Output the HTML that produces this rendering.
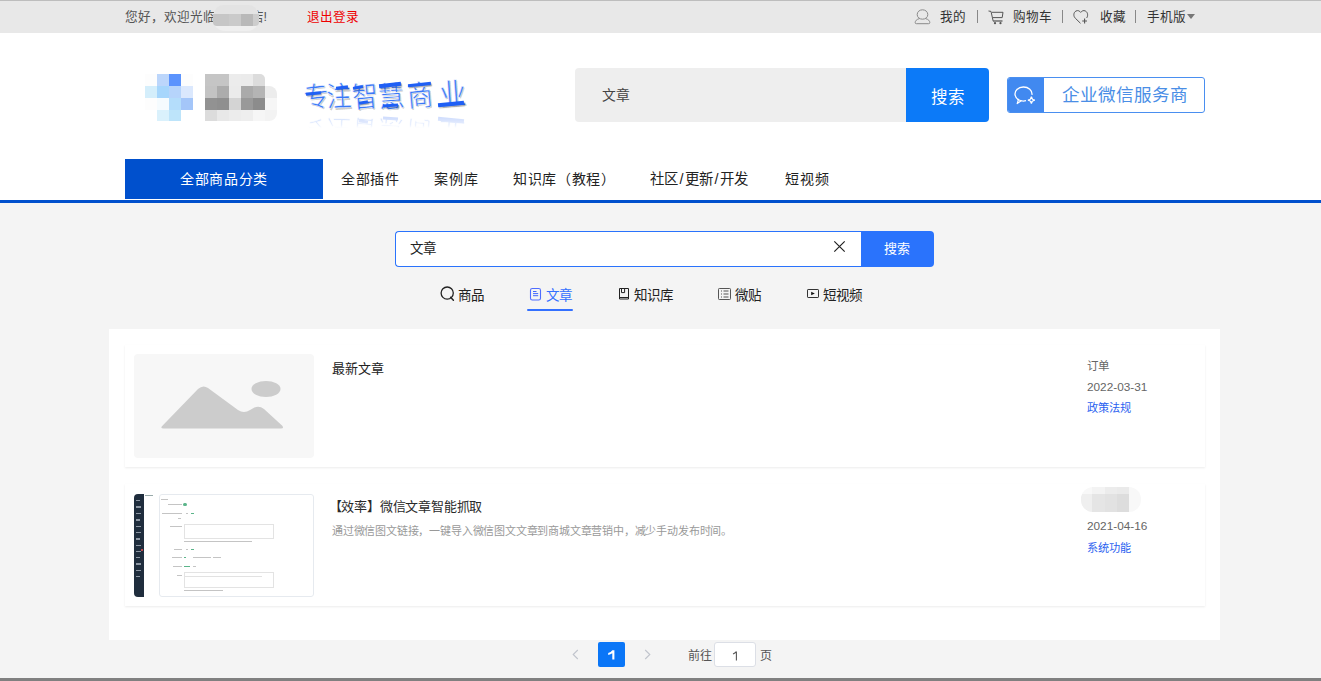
<!DOCTYPE html>
<html lang="zh-CN"><head><meta charset="utf-8">
<style>
*{margin:0;padding:0;box-sizing:border-box}
html,body{width:1321px;height:681px;overflow:hidden}
body{font-family:"Liberation Sans",sans-serif;background:#f4f4f4;position:relative;color:#333}
.abs{position:absolute}
.t{position:absolute;white-space:nowrap;line-height:1}
#topbar{left:0;top:0;width:1321px;height:33px;background:#e8e8e8;border-top:1px solid #bdbdbd}
#header{left:0;top:33px;width:1321px;height:167px;background:#fff}
#navline{left:0;top:200px;width:1321px;height:3px;background:#0050cd}
#bottombar{left:0;top:678px;width:1321px;height:3px;background:#808080}
</style></head><body>
<div id="topbar" class="abs"></div>
<div class="t" style="left:125px;top:11px;font-size:12.6px;color:#555">您好，欢迎光临</div>
<div class="t" style="left:250.5px;top:11px;font-size:12.6px;color:#555">店!</div>
<div class="abs" style="left:213px;top:5px;width:46px;height:26px;border-radius:12px;background:#efefef;filter:blur(0.5px)"></div>
<div class="abs" style="left:214px;top:5px;width:44px;height:9px;border-radius:9px 9px 0 0;background:#e3e3e3"></div>
<div class="abs" style="left:213px;top:14px;width:46px;height:12px;border-radius:0 0 4px 4px;overflow:hidden;filter:blur(0.3px)"><div class="abs" style="left:0;top:0;width:16px;height:12px;background:#c6c6c6"></div><div class="abs" style="left:16px;top:0;width:12px;height:12px;background:#cacaca"></div><div class="abs" style="left:28px;top:0;width:12px;height:12px;background:#b9b9b9"></div><div class="abs" style="left:40px;top:0;width:6px;height:12px;background:#cdcdcd"></div></div>

<div class="t" style="left:307px;top:11px;font-size:12.6px;color:#e00">退出登录</div>

<!-- right top links -->
<svg class="abs" style="left:914px;top:9px" width="17" height="16" viewBox="0 0 17 16"><path d="M8.5 0.8 C11.5 0.8 13.8 2.8 13.8 5.6 C13.8 8.3 11.5 10.2 8.5 10.2 C5.5 10.2 3.2 8.3 3.2 5.6 C3.2 2.8 5.5 0.8 8.5 0.8 Z" fill="none" stroke="#8a8a8a" stroke-width="1"/><path d="M5.5 9.6 C2.5 10.3 1.2 12 1.2 13.6 C1.2 14.4 1.6 14.7 2.4 14.7 L14.6 14.7 C15.4 14.7 15.8 14.4 15.8 13.6 C15.8 12 14.5 10.3 11.5 9.6" fill="none" stroke="#8a8a8a" stroke-width="1"/></svg>
<div class="t" style="left:940px;top:11px;font-size:12.6px;color:#333">我的</div>
<div class="abs" style="left:977px;top:10px;width:1px;height:13px;background:#888"></div>
<svg class="abs" style="left:988px;top:7px" width="17" height="18" viewBox="0 0 17 18"><path d="M0.5 4 L3 4.4 L5.2 14.2" fill="none" stroke="#555" stroke-width="1"/><path d="M4 5.3 H15 L14.2 10.6 H5" fill="none" stroke="#555" stroke-width="1"/><path d="M5 14 H14.5" stroke="#666" stroke-width="1.4"/><circle cx="7" cy="16.2" r="1.1" fill="#555"/><circle cx="12.5" cy="16.2" r="1.1" fill="#555"/></svg>
<div class="t" style="left:1013px;top:11px;font-size:12.6px;color:#333">购物车</div>
<div class="abs" style="left:1062px;top:10px;width:1px;height:13px;background:#888"></div>
<svg class="abs" style="left:1073px;top:9px" width="17" height="16" viewBox="0 0 17 16"><path d="M7.5 14.3 L2.3 9.2 C0.2 7.2 0.4 3.4 3 2 C5 1 6.6 2 7.7 3.4 C8.8 2 10.4 1 12.4 2 C15 3.4 15.2 7 13.6 9" fill="none" stroke="#555" stroke-width="1"/><path d="M11.6 9.6 V14.4 M9.2 12 H14" stroke="#555" stroke-width="1.1"/></svg>
<div class="t" style="left:1100px;top:11px;font-size:12.6px;color:#333">收藏</div>
<div class="abs" style="left:1135px;top:10px;width:1px;height:13px;background:#888"></div>
<div class="t" style="left:1147px;top:11px;font-size:12.6px;color:#333">手机版</div>
<div class="abs" style="left:1187px;top:14px;width:0;height:0;border-left:4.7px solid transparent;border-right:4.7px solid transparent;border-top:5px solid #777"></div>

<div id="header" class="abs"></div>
<div id="navline" class="abs"></div>

<!-- logo -->
<div class="abs" style="left:0;top:0;filter:blur(0.4px)">
<div class="abs" style="left:145px;top:74px;width:12px;height:12px;background:#fdfdfd"></div>
<div class="abs" style="left:157px;top:74px;width:12px;height:12px;background:#bcd6fb"></div>
<div class="abs" style="left:169px;top:74px;width:12px;height:12px;background:#5b93fd"></div>
<div class="abs" style="left:181px;top:74px;width:12px;height:12px;background:#fdfdfd"></div>
<div class="abs" style="left:145px;top:86px;width:12px;height:12px;background:#d4eefb"></div>
<div class="abs" style="left:157px;top:86px;width:12px;height:12px;background:#a6d6fc"></div>
<div class="abs" style="left:169px;top:86px;width:12px;height:12px;background:#b6d4fb"></div>
<div class="abs" style="left:181px;top:86px;width:12px;height:12px;background:#dbe8fd"></div>
<div class="abs" style="left:145px;top:98px;width:12px;height:12px;background:#fdfdfd"></div>
<div class="abs" style="left:157px;top:98px;width:12px;height:12px;background:#f5fbfe"></div>
<div class="abs" style="left:169px;top:98px;width:12px;height:12px;background:#b4ddfb"></div>
<div class="abs" style="left:181px;top:98px;width:12px;height:12px;background:#a4c6f9"></div>
<div class="abs" style="left:157px;top:110px;width:12px;height:11px;background:#daf1fc"></div>
<div class="abs" style="left:169px;top:110px;width:12px;height:11px;background:#bde4fa"></div>
<div class="abs" style="left:205px;top:74px;width:12px;height:12px;background:#c5c5c5;"></div>
<div class="abs" style="left:217px;top:74px;width:12px;height:12px;background:#c5c5c5;"></div>
<div class="abs" style="left:229px;top:74px;width:12px;height:12px;background:#ececec;"></div>
<div class="abs" style="left:241px;top:74px;width:12px;height:12px;background:#ebebeb;"></div>
<div class="abs" style="left:253px;top:74px;width:12px;height:12px;background:#dcdcdc;border-top-right-radius:5px;"></div>
<div class="abs" style="left:205px;top:86px;width:12px;height:12px;background:#c3c3c3;"></div>
<div class="abs" style="left:217px;top:86px;width:12px;height:12px;background:#acacac;"></div>
<div class="abs" style="left:229px;top:86px;width:12px;height:12px;background:#ebebeb;"></div>
<div class="abs" style="left:241px;top:86px;width:12px;height:12px;background:#aaaaaa;"></div>
<div class="abs" style="left:253px;top:86px;width:12px;height:12px;background:#b4b4b4;"></div>
<div class="abs" style="left:265px;top:86px;width:12px;height:12px;background:#ececec;border-top-right-radius:8px;"></div>
<div class="abs" style="left:205px;top:98px;width:12px;height:12px;background:#929292;"></div>
<div class="abs" style="left:217px;top:98px;width:12px;height:12px;background:#8f8f8f;"></div>
<div class="abs" style="left:229px;top:98px;width:12px;height:12px;background:#d4d4d4;"></div>
<div class="abs" style="left:241px;top:98px;width:12px;height:12px;background:#999999;"></div>
<div class="abs" style="left:253px;top:98px;width:12px;height:12px;background:#8c8c8c;"></div>
<div class="abs" style="left:265px;top:98px;width:12px;height:12px;background:#f6f6f6;"></div>
<div class="abs" style="left:205px;top:110px;width:12px;height:11px;background:#dcdcdc;"></div>
<div class="abs" style="left:217px;top:110px;width:12px;height:11px;background:#e8e8e8;"></div>
<div class="abs" style="left:229px;top:110px;width:12px;height:11px;background:#ececec;"></div>
<div class="abs" style="left:241px;top:110px;width:12px;height:11px;background:#eeeeee;"></div>
<div class="abs" style="left:253px;top:110px;width:12px;height:11px;background:#f6f6f6;"></div>
<div class="abs" style="left:265px;top:110px;width:12px;height:11px;background:#f3f3f3;border-bottom-right-radius:8px;"></div>
</div>
<!-- slogan -->
<div class="t" style="left:302px;top:83px;font-size:25px;color:#3a78f7;-webkit-text-stroke:0.4px #fff;transform:rotate(-6deg) scaleY(1.13);transform-origin:50% 0;text-shadow:1px 1.5px 0.6px rgba(0,0,0,0.2)">专</div>
<div class="t" style="left:326px;top:83px;font-size:25px;color:#3a78f7;-webkit-text-stroke:0.4px #fff;transform:rotate(-3deg) scaleY(1.13);transform-origin:50% 0;text-shadow:1px 1.5px 0.6px rgba(0,0,0,0.2)">注</div>
<div class="t" style="left:351px;top:82px;font-size:26px;color:#3a78f7;-webkit-text-stroke:0.4px #fff;transform:rotate(-5deg) scaleY(1.13);transform-origin:50% 0;text-shadow:1px 1.5px 0.6px rgba(0,0,0,0.2)">智</div>
<div class="t" style="left:377px;top:82px;font-size:26px;color:#3a78f7;-webkit-text-stroke:0.4px #fff;transform:rotate(-4deg) scaleY(1.13);transform-origin:50% 0;text-shadow:1px 1.5px 0.6px rgba(0,0,0,0.2)">慧</div>
<div class="t" style="left:406px;top:81px;font-size:26px;color:#3a78f7;-webkit-text-stroke:0.4px #fff;transform:rotate(-5deg) scaleY(1.13);transform-origin:50% 0;text-shadow:1px 1.5px 0.6px rgba(0,0,0,0.2)">商</div>
<div class="t" style="left:438px;top:80px;font-size:27px;color:#3a78f7;-webkit-text-stroke:0.4px #fff;transform:rotate(-4deg) scaleY(1.13);transform-origin:50% 0;text-shadow:1px 1.5px 0.6px rgba(0,0,0,0.2)">业</div>
<div class="abs" style="left:306px;top:92px;width:15px;height:3.4px;background:#1f5ff5;transform:rotate(-6deg);box-shadow:1px 1.5px 1px rgba(0,0,0,0.22)"></div>
<div class="abs" style="left:336px;top:86px;width:12px;height:3px;background:#1f5ff5;transform:rotate(-7deg);box-shadow:1px 1.5px 1px rgba(0,0,0,0.22)"></div>
<div class="abs" style="left:353px;top:86px;width:10px;height:3px;background:#1f5ff5;transform:rotate(-10deg);box-shadow:1px 1.5px 1px rgba(0,0,0,0.22)"></div>
<div class="abs" style="left:359px;top:101px;width:9px;height:3px;background:#1f5ff5;transform:rotate(-10deg);box-shadow:1px 1.5px 1px rgba(0,0,0,0.22)"></div>
<div class="abs" style="left:379px;top:83px;width:22px;height:3.5px;background:#1f5ff5;transform:rotate(-6deg);box-shadow:1px 1.5px 1px rgba(0,0,0,0.22)"></div>
<div class="abs" style="left:383px;top:104px;width:15px;height:3px;background:#1f5ff5;transform:rotate(-3deg);box-shadow:1px 1.5px 1px rgba(0,0,0,0.22)"></div>
<div class="abs" style="left:408px;top:83px;width:23px;height:3.4px;background:#1f5ff5;transform:rotate(-6deg);box-shadow:1px 1.5px 1px rgba(0,0,0,0.22)"></div>
<div class="abs" style="left:438px;top:102px;width:26px;height:4px;background:#1f5ff5;transform:rotate(-5deg);box-shadow:1px 1.5px 1px rgba(0,0,0,0.22)"></div>
<div class="abs" style="left:0;top:0;opacity:0.35;filter:blur(0.4px)">
<div class="t" style="left:302px;top:116px;font-size:25px;color:#3a78f7;-webkit-text-stroke:0.6px #fff;transform:scaleY(-1) rotate(-6deg)">专</div>
<div class="t" style="left:326px;top:116px;font-size:25px;color:#3a78f7;-webkit-text-stroke:0.6px #fff;transform:scaleY(-1) rotate(-3deg)">注</div>
<div class="t" style="left:351px;top:116px;font-size:26px;color:#3a78f7;-webkit-text-stroke:0.6px #fff;transform:scaleY(-1) rotate(-5deg)">智</div>
<div class="t" style="left:377px;top:116px;font-size:26px;color:#3a78f7;-webkit-text-stroke:0.6px #fff;transform:scaleY(-1) rotate(-4deg)">慧</div>
<div class="t" style="left:406px;top:117px;font-size:26px;color:#3a78f7;-webkit-text-stroke:0.6px #fff;transform:scaleY(-1) rotate(-5deg)">商</div>
<div class="t" style="left:438px;top:117px;font-size:27px;color:#3a78f7;-webkit-text-stroke:0.6px #fff;transform:scaleY(-1) rotate(-4deg)">业</div>
<div class="abs" style="left:306px;top:128.6px;width:15px;height:3.4px;background:#1f5ff5;transform:rotate(6deg)"></div>
<div class="abs" style="left:336px;top:135px;width:12px;height:3px;background:#1f5ff5;transform:rotate(7deg)"></div>
<div class="abs" style="left:353px;top:135px;width:10px;height:3px;background:#1f5ff5;transform:rotate(10deg)"></div>
<div class="abs" style="left:359px;top:120px;width:9px;height:3px;background:#1f5ff5;transform:rotate(10deg)"></div>
<div class="abs" style="left:379px;top:137.5px;width:22px;height:3.5px;background:#1f5ff5;transform:rotate(6deg)"></div>
<div class="abs" style="left:383px;top:117px;width:15px;height:3px;background:#1f5ff5;transform:rotate(3deg)"></div>
<div class="abs" style="left:408px;top:137.6px;width:23px;height:3.4px;background:#1f5ff5;transform:rotate(6deg)"></div>
<div class="abs" style="left:438px;top:118px;width:26px;height:4px;background:#1f5ff5;transform:rotate(5deg)"></div>
</div>
<div class="abs" style="left:298px;top:111px;width:180px;height:45px;background:linear-gradient(rgba(255,255,255,0.15) 0px,rgba(255,255,255,0.7) 14px,#fff 17px)"></div>
<!-- search -->
<div class="abs" style="left:575px;top:68px;width:332px;height:54px;background:#eeeeee;border-radius:4px 0 0 4px"></div>
<div class="t" style="left:602px;top:89px;font-size:13.8px;color:#444">文章</div>
<div class="abs" style="left:906px;top:68px;width:83px;height:54px;background:#0c7af8;border-radius:0 4px 4px 0"></div>
<div class="t" style="left:931px;top:88.5px;font-size:16.5px;color:#fff">搜索</div>

<!-- qywx -->
<div class="abs" style="left:1007px;top:77px;width:198px;height:36px;border:1px solid #4a8ff0;border-radius:3px;background:#fff;overflow:hidden">
 <div class="abs" style="left:0;top:0;width:36px;height:34px;background:#4189f0"></div>
</div>
<svg class="abs" style="left:1012px;top:85px" width="26" height="23" viewBox="0 0 26 23"><path d="M14 15.7 A8.5 7 0 1 1 19.95 9.8" fill="none" stroke="#fff" stroke-width="1.3"/><path d="M6.6 13.9 L5.2 18.6 L9.6 15.6" fill="none" stroke="#fff" stroke-width="1.2" stroke-linejoin="round"/><path d="M19.4 11.6 Q19.7 14.8 22.9 15.1 Q19.7 15.4 19.4 18.6 Q19.1 15.4 15.9 15.1 Q19.1 14.8 19.4 11.6Z" fill="none" stroke="#fff" stroke-width="1.2"/></svg>
<div class="t" style="left:1062px;top:87px;font-size:17.6px;color:#4a8ee6">企业微信服务商</div>

<!-- nav -->
<div class="abs" style="left:125px;top:159px;width:198px;height:40px;background:#0050cd"></div>
<div class="t" style="left:180px;top:172px;font-size:14px;letter-spacing:0.7px;color:#fff">全部商品分类</div>
<div class="t" style="left:341px;top:172px;font-size:14px;letter-spacing:0.5px;color:#222">全部插件</div>
<div class="t" style="left:434px;top:172px;font-size:14px;letter-spacing:1px;color:#222">案例库</div>
<div class="t" style="left:513px;top:172px;font-size:14px;letter-spacing:0.67px;color:#222">知识库（教程）</div>
<div class="t" style="left:650px;top:172px;font-size:14.4px;color:#222">社区<span style="margin:0 1.5px">/</span>更新<span style="margin:0 1.5px">/</span>开发</div>
<div class="t" style="left:785px;top:172px;font-size:14px;letter-spacing:1px;color:#222">短视频</div>


<!-- search 2 -->
<div class="abs" style="left:395px;top:231px;width:470px;height:36px;background:#fff;border:1px solid #2a73fc;border-right:none;border-radius:4px 0 0 4px"></div>
<div class="t" style="left:410px;top:242px;font-size:13.5px;color:#222">文章</div>
<svg class="abs" style="left:833px;top:240px" width="13" height="13" viewBox="0 0 13 13"><path d="M1.3 1.3 L11.7 11.7 M11.7 1.3 L1.3 11.7" stroke="#222" stroke-width="1.2"/></svg>
<div class="abs" style="left:861px;top:231px;width:73px;height:36px;background:#2a73fc;border-radius:0 4px 4px 0"></div>
<div class="t" style="left:884px;top:242px;font-size:13px;color:#fff">搜索</div>

<!-- tabs -->
<svg class="abs" style="left:440px;top:286px" width="16" height="16" viewBox="0 0 16 16"><circle cx="7.2" cy="7.1" r="6.1" fill="none" stroke="#222" stroke-width="1.3"/><path d="M10.6 11.2 L13.4 14.2" stroke="#222" stroke-width="1.5" stroke-linecap="round"/></svg>
<div class="t" style="left:458px;top:288.5px;font-size:13.5px;color:#222">商品</div>
<svg class="abs" style="left:529px;top:287px" width="13" height="14" viewBox="0 0 13 14"><rect x="1.5" y="1.5" width="10" height="11.5" rx="1.8" fill="none" stroke="#4f6cff" stroke-width="1.1"/><path d="M4 4.5 H7.5 M4 6.6 H9.2 M4 8.7 H9.2" stroke="#3f66ff" stroke-width="1"/></svg>
<div class="t" style="left:546px;top:288.5px;font-size:13.5px;color:#3370ff">文章</div>
<div class="abs" style="left:527px;top:309px;width:46px;height:2px;background:#3370ff;border-radius:1px"></div>
<svg class="abs" style="left:618px;top:287px" width="13" height="14" viewBox="0 0 13 14"><path d="M1.5 1.5 H10.5 V12 H1.5 Z M3.5 1.5 V5.6 H6.6 V1.5 M1.5 10.5 H10.5" fill="none" stroke="#222" stroke-width="1"/></svg>
<div class="t" style="left:634px;top:288.5px;font-size:13.5px;color:#222">知识库</div>
<svg class="abs" style="left:718px;top:287px" width="14" height="14" viewBox="0 0 14 14"><rect x="0.5" y="1.5" width="12" height="11" rx="0.8" fill="none" stroke="#555" stroke-width="1"/><path d="M3 4 H4 M5.5 4 H10.5 M3 7 H4 M5.5 7 H10.5 M3 10 H4 M5.5 10 H10.5" stroke="#555" stroke-width="1"/></svg>
<div class="t" style="left:735px;top:288.5px;font-size:13.5px;color:#222">微贴</div>
<svg class="abs" style="left:806px;top:287px" width="14" height="13" viewBox="0 0 14 13"><rect x="1.5" y="2.5" width="11" height="8" rx="0.6" fill="none" stroke="#333" stroke-width="1"/><path d="M5.2 4.8 L8.8 6.5 L5.2 8.2 Z" fill="#111"/></svg>
<div class="t" style="left:823px;top:288.5px;font-size:13.5px;color:#222">短视频</div>

<!-- panel -->
<div class="abs" style="left:109px;top:329px;width:1111px;height:311px;background:#fff"></div>

<!-- item 1 -->
<div class="abs" style="left:125px;top:345px;width:1080px;height:122px;background:#fff;box-shadow:0 1px 2px rgba(0,0,0,0.08)"></div>
<div class="abs" style="left:134px;top:354px;width:180px;height:104px;background:#f7f7f7;border-radius:4px"></div>
<svg class="abs" style="left:160px;top:379px" width="125" height="51" viewBox="0 0 125 51"><ellipse cx="106" cy="10" rx="14.5" ry="8" fill="#cccccc"/><path d="M3.5 49.5 Q0 49.5 2.2 47 L38 10 Q43 5.5 48 9 L78 31 Q84 35 90 31 L94 28.8 Q99 26 104 30 L122 46.5 Q124.5 49.5 121 49.5 Z" fill="#cccccc"/></svg>
<div class="t" style="left:332px;top:361.5px;font-size:13px;color:#222">最新文章</div>
<div class="t" style="left:1087px;top:361px;font-size:11.5px;color:#666">订单</div>
<div class="t" style="left:1087px;top:381.5px;font-size:11.8px;color:#666">2022-03-31</div>
<div class="t" style="left:1087px;top:403px;font-size:11.2px;color:#2a62f0">政策法规</div>

<!-- item 2 -->
<div class="abs" style="left:125px;top:484px;width:1080px;height:122px;background:#fff;box-shadow:0 1px 2px rgba(0,0,0,0.08)"></div>
<div class="abs" style="left:0;top:0;filter:blur(0.5px)">
<div class="abs" style="left:134px;top:494px;width:9.5px;height:103px;background:#1f2d3d;border-radius:4px 0 0 4px"></div>
<div class="abs" style="left:135.5px;top:500.1px;width:4px;height:1.3px;background:#8d97a4"></div>
<div class="abs" style="left:135.5px;top:506.4px;width:5px;height:1.3px;background:#8d97a4"></div>
<div class="abs" style="left:135.5px;top:512.6px;width:5px;height:1.3px;background:#8d97a4"></div>
<div class="abs" style="left:135.5px;top:519.3px;width:4px;height:1.3px;background:#8d97a4"></div>
<div class="abs" style="left:135.5px;top:525.7px;width:5px;height:1.3px;background:#8d97a4"></div>
<div class="abs" style="left:135.5px;top:531.9px;width:5px;height:1.3px;background:#8d97a4"></div>
<div class="abs" style="left:135.5px;top:538.3px;width:4px;height:1.3px;background:#8d97a4"></div>
<div class="abs" style="left:135.5px;top:544.5px;width:5px;height:1.3px;background:#8d97a4"></div>
<div class="abs" style="left:135.5px;top:550.8px;width:5px;height:1.3px;background:#8d97a4"></div>
<div class="abs" style="left:135.5px;top:557.0px;width:4px;height:1.3px;background:#8d97a4"></div>
<div class="abs" style="left:135.5px;top:563.4px;width:5px;height:1.3px;background:#8d97a4"></div>
<div class="abs" style="left:135.5px;top:569.5px;width:5px;height:1.3px;background:#8d97a4"></div>
<div class="abs" style="left:135.5px;top:575.9px;width:4px;height:1.3px;background:#8d97a4"></div>
<div class="abs" style="left:140.5px;top:548.5px;width:2px;height:2px;border-radius:1px;background:#e55"></div>
<div class="abs" style="left:145px;top:495px;width:8px;height:1.3px;background:#9aa"></div>
<div class="abs" style="left:159px;top:494px;width:155px;height:103px;border:1px solid #e6eaef;border-radius:3px"></div>
<div class="abs" style="left:161px;top:498.5px;width:7px;height:1.2px;background:#c4c4c4"></div>
<div class="abs" style="left:168px;top:504.2px;width:14px;height:1.2px;background:#c4c4c4"></div>
<div class="abs" style="left:183px;top:503px;width:4px;height:3px;border-radius:2px;background:#5bb58a"></div>
<div class="abs" style="left:162px;top:512.5px;width:20px;height:1.2px;background:#c4c4c4"></div>
<div class="abs" style="left:186px;top:512.5px;width:2px;height:1.2px;background:#c4c4c4"></div>
<div class="abs" style="left:191px;top:512.5px;width:3px;height:1.2px;background:#5bb58a"></div>
<div class="abs" style="left:178px;top:517.7px;width:3px;height:1.2px;background:#c4c4c4"></div>
<div class="abs" style="left:170px;top:526px;width:12px;height:1.2px;background:#c4c4c4"></div>
<div class="abs" style="left:183.5px;top:524px;width:90px;height:15px;border:1px solid #e3e3e3"></div>
<div class="abs" style="left:184px;top:541.3px;width:68px;height:1.2px;background:#c4c4c4"></div>
<div class="abs" style="left:174px;top:549px;width:8px;height:1.2px;background:#c4c4c4"></div>
<div class="abs" style="left:186px;top:549px;width:2px;height:1.2px;background:#c4c4c4"></div>
<div class="abs" style="left:191px;top:549px;width:3px;height:1.2px;background:#5bb58a"></div>
<div class="abs" style="left:172px;top:557.3px;width:10px;height:1.2px;background:#c4c4c4"></div>
<div class="abs" style="left:184px;top:557.3px;width:2px;height:1.2px;background:#5bb58a"></div>
<div class="abs" style="left:193px;top:557.3px;width:18px;height:1.2px;background:#c4c4c4"></div>
<div class="abs" style="left:213px;top:557.3px;width:8px;height:1.2px;background:#c4c4c4"></div>
<div class="abs" style="left:173px;top:566px;width:9px;height:1.2px;background:#c4c4c4"></div>
<div class="abs" style="left:184px;top:566px;width:6px;height:1.2px;background:#5bb58a"></div>
<div class="abs" style="left:193px;top:566px;width:3px;height:1.2px;background:#c4c4c4"></div>
<div class="abs" style="left:177px;top:575px;width:5px;height:1.2px;background:#c4c4c4"></div>
<div class="abs" style="left:183.5px;top:572px;width:90px;height:16px;border:1px solid #e3e3e3"></div>
<div class="abs" style="left:185px;top:576px;width:77px;height:1px;background:#e2e2e2"></div>
<div class="abs" style="left:184px;top:589.5px;width:39px;height:1.2px;background:#c4c4c4"></div>
</div>
<div class="t" style="left:328.5px;top:499.5px;font-size:13px;letter-spacing:-0.2px;color:#2a2a2a">【效率】微信文章智能抓取</div>
<div class="t" style="left:332px;top:525.5px;font-size:11px;letter-spacing:-0.19px;color:#999">通过微信图文链接，一键导入微信图文文章到商城文章营销中，减少手动发布时间。</div>
<div class="abs" style="left:1081px;top:487px;width:60px;height:25px;border-radius:12px;background:#f8f8f8;overflow:hidden;filter:blur(0.3px)">
 <div class="abs" style="left:11px;top:0;width:13px;height:7px;background:#f3f3f3"></div>
 <div class="abs" style="left:24px;top:0;width:12px;height:7px;background:#ececec"></div>
 <div class="abs" style="left:36px;top:0;width:12px;height:7px;background:#eaeaea"></div>
 <div class="abs" style="left:0;top:7px;width:11px;height:18px;background:#efefef"></div>
 <div class="abs" style="left:11px;top:7px;width:13px;height:18px;background:#e5e5e5"></div>
 <div class="abs" style="left:24px;top:7px;width:12px;height:18px;background:#e2e2e2"></div>
 <div class="abs" style="left:36px;top:7px;width:12px;height:18px;background:#dddddd"></div>
</div>
<div class="t" style="left:1087px;top:520.5px;font-size:11.8px;color:#666">2021-04-16</div>
<div class="t" style="left:1087px;top:543px;font-size:11.2px;color:#2a62f0">系统功能</div>

<!-- pagination -->
<svg class="abs" style="left:572px;top:649px" width="7" height="11" viewBox="0 0 7 11"><path d="M5.8 1 L1.2 5.5 L5.8 10" fill="none" stroke="#c0c4cc" stroke-width="1.1"/></svg>
<div class="abs" style="left:598px;top:642px;width:27px;height:25px;background:#0a76f7;border-radius:2px"></div>
<svg class="abs" style="left:607px;top:650px" width="9" height="10" viewBox="0 0 9 10"><path d="M5.3 0.3 H7.4 V9.6 H5.3 V3.2 Q3.6 4.4 1.2 4.9 V3 Q4 2.2 5.3 0.3 Z" fill="#fff"/></svg>
<svg class="abs" style="left:644px;top:649px" width="7" height="11" viewBox="0 0 7 11"><path d="M1.2 1 L5.8 5.5 L1.2 10" fill="none" stroke="#c0c4cc" stroke-width="1.1"/></svg>
<div class="t" style="left:688px;top:650px;font-size:12px;color:#555">前往</div>
<div class="abs" style="left:714px;top:642px;width:42px;height:25px;background:#fff;border:1px solid #dcdfe6;border-radius:3px"></div>
<svg class="abs" style="left:732px;top:651px" width="7" height="10" viewBox="0 0 7 10"><path d="M4.4 0.4 V9.5 M4.4 0.6 Q3 2.3 1 3" fill="none" stroke="#555" stroke-width="1.1"/></svg>
<div class="t" style="left:759.5px;top:650px;font-size:12px;color:#555">页</div>
<div id="bottombar" class="abs"></div>
</body></html>
